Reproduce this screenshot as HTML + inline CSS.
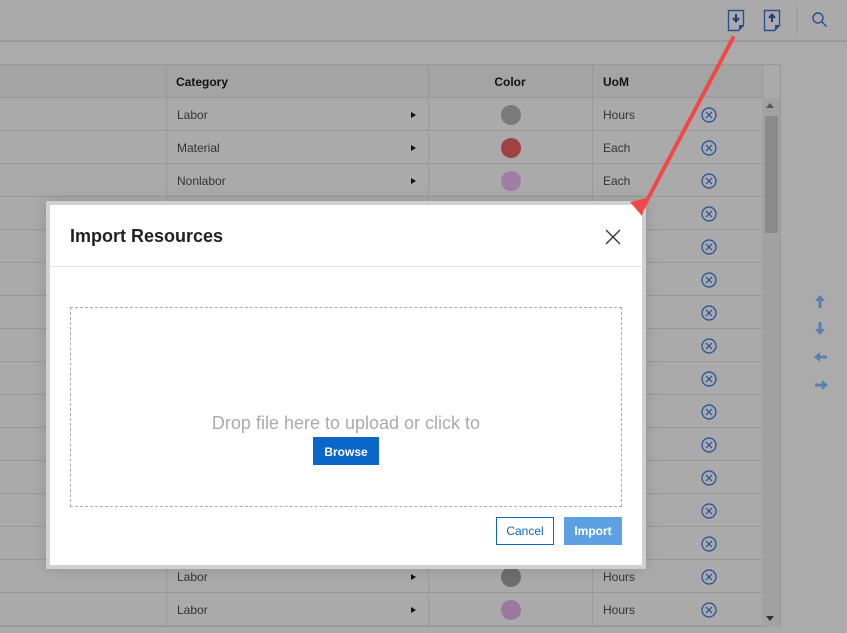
<!DOCTYPE html>
<html><head><meta charset="utf-8"><style>
*{box-sizing:border-box;margin:0;padding:0}
body{width:847px;height:633px;overflow:hidden;background:#ababab;font-family:"Liberation Sans",Roboto,sans-serif;position:relative}
.top{position:absolute;left:0;top:0;width:847px;height:42px;background:#aaaaaa;border-bottom:2px solid #9a9a9a}
.tbl{position:absolute;left:0;top:64px;width:781px;height:563px;border:1px solid #999;border-left:none;background:#aaa}
.row{position:absolute;left:0;width:762px;height:33px;border-bottom:1px solid #999}
.c{position:absolute;top:0;height:33px;border-right:1px solid #999;font-size:12px;color:#333;line-height:34px}
.hd{background:#a4a4a4}
.hd .c{font-weight:bold;color:#111;font-size:12px}
.dot{position:absolute;left:73px;top:7px;width:20px;height:20px;border-radius:50%}
.tri{position:absolute;right:12px;top:14px;border-left:5px solid #111;border-top:3.5px solid transparent;border-bottom:3.5px solid transparent}
.x{position:absolute;left:109px;top:9px;width:16px;height:16px}
.sb{position:absolute;left:762px;top:33px;width:18px;height:529px;background:#a2a2a2}
.modal{position:absolute;left:46px;top:201px;width:600px;height:368px;background:#d0d0d0;padding:4px;box-shadow:0 0 14px rgba(0,0,0,.15)}
.in{background:#fff;width:100%;height:100%;position:relative}
</style></head><body>
<div class="top">
<svg style="position:absolute;left:727px;top:9px" width="20" height="24" viewBox="0 0 20 24"><path d="M1.5 1.5h15v15l-5 5h-10z" fill="none" stroke="#2a4f8f" stroke-width="1.4"/><path d="M12 21l5-5h-5z" fill="#1e4a9a"/><path d="M9 5v7M6 9l3 3.5 3-3.5" stroke="#1e3a7a" stroke-width="2" fill="none"/></svg>
<svg style="position:absolute;left:763px;top:9px" width="20" height="24" viewBox="0 0 20 24"><path d="M1.5 1.5h15v15l-5 5h-10z" fill="none" stroke="#2a4f8f" stroke-width="1.4"/><path d="M12 21l5-5h-5z" fill="#1e4a9a"/><path d="M9 13V6M6 9l3-3.5 3 3.5" stroke="#1e3a7a" stroke-width="2" fill="none"/></svg>
<div style="position:absolute;left:796px;top:6px;width:1px;height:28px;background:#999"></div>
<svg style="position:absolute;left:811px;top:11px" width="18" height="18" viewBox="0 0 18 18"><circle cx="7" cy="7" r="5" fill="none" stroke="#2a4f8f" stroke-width="1.4"/><path d="M10.5 10.5l5 5" stroke="#2a4f8f" stroke-width="1.5"/></svg>
</div>
<div class="tbl">
<div class="row hd" style="top:0"><div class="c" style="left:0;width:167px"></div><div class="c" style="left:166px;width:263px;padding-left:10px">Category</div><div class="c" style="left:428px;width:165px;text-align:center">Color</div><div class="c" style="left:592px;width:171px;padding-left:11px">UoM</div></div>
<div id="rows"></div>
<div class="sb"><div style="position:absolute;left:4px;top:5px;border-bottom:5px solid #555;border-left:4px solid transparent;border-right:4px solid transparent"></div><div style="position:absolute;left:3px;top:18px;width:13px;height:117px;background:#8a8a8a"></div><div style="position:absolute;left:4px;bottom:6px;border-top:5px solid #333;border-left:4px solid transparent;border-right:4px solid transparent"></div></div>
</div>
<script>
var d=[["Labor","#7a7a7a","Hours"],["Material","#a04242","Each"],["Nonlabor","#a07ea6","Each"]];
for(var i=3;i<14;i++)d.push(["Labor","#6e6e6e","Hours"]);
d[14]=["Labor","#6e6e6e","Hours"];d[15]=["Labor","#9c789f","Hours"];
var h="";
for(var i=0;i<16;i++){var r=d[i];h+='<div class="row" style="top:'+(33+i*33)+'px"><div class="c" style="left:0;width:167px"></div><div class="c" style="left:166px;width:263px;padding-left:11px">'+r[0]+'<span class="tri"></span></div><div class="c" style="left:428px;width:165px"><span class="dot" style="background:'+r[1]+'"></span></div><div class="c" style="left:592px;width:171px;border-right:none;padding-left:11px">'+r[2]+'<svg class="x" viewBox="0 0 16 16"><circle cx="8" cy="8" r="7" fill="none" stroke="#1e4f9a" stroke-width="1.2"/><path d="M5 5l6 6M11 5l-6 6" stroke="#1e4f9a" stroke-width="1.2"/></svg></div></div>';}
document.getElementById("rows").innerHTML=h;
</script>
<svg style="position:absolute;left:812px;top:293px" width="18" height="100" viewBox="0 0 18 100" fill="#5a7fae"><path d="M8 2l5 6h-3.5v7h-3v-7H3z"/><path d="M6.5 29h3v7H13l-5 6-5-6h3.5z"/><path d="M2 64l6-5v3.5h7v3H8V69z"/><path d="M16 92l-6 5v-3.5H3v-3h7V87z"/></svg>
<div class="modal"><div class="in">
<div style="position:absolute;left:20px;top:21px;font-size:18px;font-weight:bold;color:#222">Import Resources</div>
<svg style="position:absolute;left:555px;top:24px" width="16" height="16" viewBox="0 0 16 16"><path d="M1 1l14 14M15 1L1 15" stroke="#333" stroke-width="1.3"/></svg>
<div style="position:absolute;left:0;top:61px;width:100%;height:1px;background:#e2e2e2"></div>
<div style="position:absolute;left:20px;top:102px;width:552px;height:200px;border:1px dashed #aaa">
<div style="position:absolute;left:0;width:100%;top:105px;text-align:center;font-size:18px;color:#aaa">Drop file here to upload or click to</div>
<div style="position:absolute;left:242px;top:129px;width:66px;height:28px;background:#0a66c8;color:#fff;font-size:12px;font-weight:bold;text-align:center;line-height:30px">Browse</div>
</div>
<div style="position:absolute;left:446px;top:312px;width:58px;height:28px;border:1px solid #0a66c8;color:#0a66c8;font-size:12px;text-align:center;line-height:27px">Cancel</div>
<div style="position:absolute;left:514px;top:312px;width:58px;height:28px;background:#5ea1e3;color:#fff;font-size:12px;font-weight:bold;text-align:center;line-height:29px">Import</div>
</div></div>
<svg style="position:absolute;left:0;top:0" width="847" height="633"><path d="M733 38L643 208" stroke="#f04848" stroke-width="4" stroke-linecap="round"/><path d="M630 202l12 14 5-18z" fill="#f04848"/></svg>
</body></html>
